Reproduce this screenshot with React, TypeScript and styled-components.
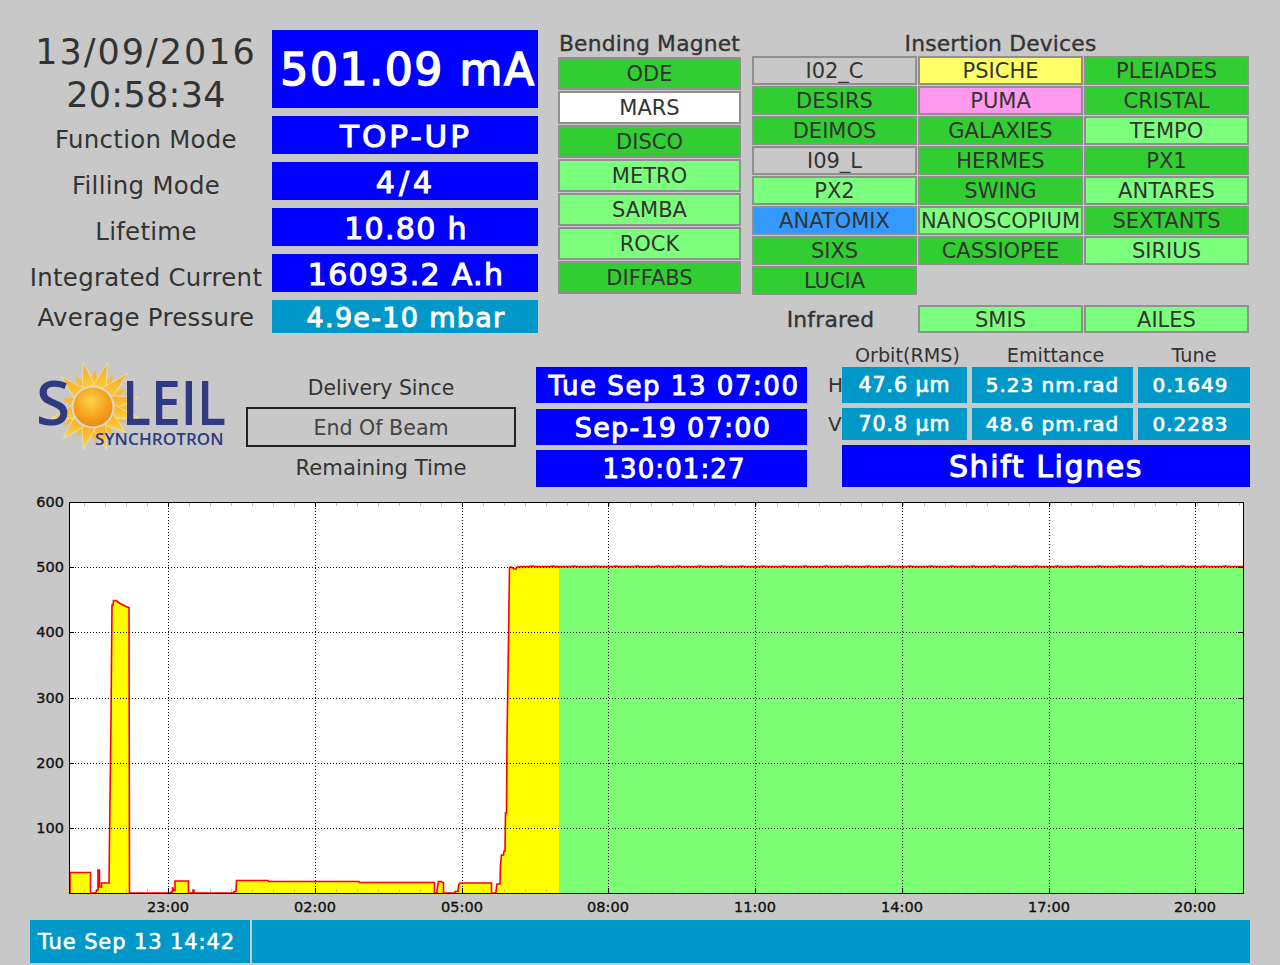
import React from "react";
import styled, { createGlobalStyle } from "styled-components";

const Global = createGlobalStyle`
  html, body { margin: 0; padding: 0; background: #c8c8c8; }
  body { font-family: "DejaVu Sans", sans-serif; color: #333; }
`;

const Page = styled.div`
  width: 1280px;
  height: 965px;
  background: #c8c8c8;
  padding-top: 30px;
  box-sizing: border-box;
  overflow: hidden;
`;

const Top = styled.section`
  display: flex;
  height: 303px;
  margin-left: 30px;
`;

const Status = styled.div`
  width: 508px;
  display: grid;
  grid-template-columns: 232px 266px;
  grid-template-rows: 78px 38px 38px 38px 38px 33px;
  column-gap: 10px;
  row-gap: 8px;
`;

const DateTime = styled.div`
  padding-top: 1px;
  text-align: center;
`;

const DateLine = styled.div<{ $spacing: number }>`
  font-size: 35px;
  line-height: 43px;
  letter-spacing: ${(p) => p.$spacing}px;
  white-space: nowrap;
`;

const FieldLabel = styled.div<{ $drop?: number }>`
  font-size: 24.4px;
  letter-spacing: 0.3px;
  padding-top: ${(p) => p.$drop ?? 9}px;
  box-sizing: border-box;
  display: flex;
  align-items: center;
  justify-content: center;
  white-space: nowrap;
`;

type ValueTone = "blue" | "cyan";
const toneBg: Record<ValueTone, string> = { blue: "#0000ff", cyan: "#0098c8" };

const Value = styled.div<{ $tone?: ValueTone; $size?: number; $spacing?: number; $dy?: number; $inset?: number; $lead?: number }>`
  background: ${(p) => toneBg[p.$tone ?? "blue"]};
  color: #fff;
  font-weight: 400;
  font-size: ${(p) => p.$size ?? 30}px;
  letter-spacing: ${(p) => p.$spacing ?? 0}px;
  -webkit-text-stroke: ${(p) => ((p.$size ?? 30) * 0.036).toFixed(2)}px #fff;
  padding-top: ${(p) => Math.max(p.$dy ?? 0, 0) * 2}px;
  padding-bottom: ${(p) => Math.max(-(p.$dy ?? 0), 0) * 2}px;
  padding-right: ${(p) => p.$inset ?? 0}px;
  padding-left: ${(p) => p.$lead ?? 0}px;
  box-sizing: border-box;
  display: flex;
  align-items: center;
  justify-content: center;
  white-space: nowrap;
`;

const Bending = styled.div`
  width: 183px;
  margin-left: 20px;
  display: grid;
  grid-template-columns: 183px;
  grid-template-rows: 26px repeat(7, 33px);
  row-gap: 1px;
  align-content: start;
`;

const GroupTitle = styled.div`
  font-size: 21.8px;
  letter-spacing: 0.2px;
  -webkit-text-stroke: 0.35px #333;
  text-align: center;
  line-height: 27px;
  white-space: nowrap;
`;

type Tone = "green" | "light" | "white" | "grey" | "yellow" | "pink" | "azure";
const tileBg: Record<Tone, string> = {
  green: "#32cd32",
  light: "#7cff7c",
  white: "#ffffff",
  grey: "#c8c8c8",
  yellow: "#ffff66",
  pink: "#ff99ee",
  azure: "#3399ff",
};

const Tile = styled.div<{ $tone: Tone }>`
  background: ${(p) => tileBg[p.$tone]};
  border: 2px solid #909090;
  box-sizing: border-box;
  font-size: 21px;
  display: flex;
  align-items: center;
  justify-content: center;
  white-space: nowrap;
  overflow: hidden;
`;

const InfraredTile = styled(Tile)`
  padding-top: 2px;
`;

const Insertion = styled.div`
  width: 497px;
  margin-left: 11px;
  display: flex;
  flex-direction: column;
`;

const InsertionGrid = styled.div`
  display: grid;
  grid-template-columns: repeat(3, 165px);
  grid-auto-rows: 29px;
  gap: 1px;
  margin-top: -1px;
`;

const InfraredRow = styled.div`
  display: grid;
  grid-template-columns: repeat(3, 165px);
  grid-template-rows: 28px;
  gap: 1px;
  margin-top: 10px;
`;

const InfraredLabel = styled.div`
  font-size: 21.8px;
  letter-spacing: 0.2px;
  -webkit-text-stroke: 0.35px #333;
  padding-right: 8px;
  display: flex;
  align-items: center;
  justify-content: center;
`;

const Middle = styled.section`
  display: flex;
  height: 142px;
  margin: 12px 0 0 30px;
`;

const Logo = styled.svg`
  width: 200px;
  height: 100px;
  margin-top: 10px;
  flex: none;
`;

const Delivery = styled.div`
  width: 270px;
  margin-left: 16px;
  padding-top: 30px;
  display: flex;
  flex-direction: column;
`;

const DeliveryText = styled.div<{ $size: number }>`
  font-size: ${(p) => p.$size}px;
  line-height: 26px;
  height: 24px;
  text-align: center;
`;

const BeamBox = styled.div`
  height: 40px;
  margin: 8px 0;
  padding-top: 2px;
  border: 2px solid #222;
  box-sizing: border-box;
  font-size: 20.6px;
  color: #444;
  display: flex;
  align-items: center;
  justify-content: center;
`;

const Dates = styled.div`
  width: 271px;
  margin-left: 20px;
  padding-top: 22px;
  display: grid;
  grid-template-rows: 37px 36px 37px;
  row-gap: 5px;
  & > :first-child { height: 36px; }
`;

const Machine = styled.div`
  width: 422px;
  margin-left: 21px;
  display: grid;
  grid-template-columns: 9px 125px 161px 112px;
  grid-template-rows: 17px 36px 32px 42px;
  column-gap: 5px;
  row-gap: 5px;
`;

const Heading = styled.div<{ $nudge?: number }>`
  font-size: 19.2px;
  line-height: 20px;
  margin-top: 1px;
  padding-left: ${(p) => p.$nudge ?? 0}px;
  text-align: center;
  white-space: nowrap;
`;

const Plane = styled.div`
  font-size: 20px;
  display: flex;
  align-items: center;
  white-space: nowrap;
`;

const Shift = styled(Value)`
  grid-column: 2 / 5;
`;

const Chart = styled.svg`
  display: block;
  width: 1280px;
  height: 433px;
`;

const AxisText = styled.text`
  font-family: "DejaVu Sans", sans-serif;
  font-size: 14.5px;
  fill: #111;
  stroke: #111;
  stroke-width: 0.35px;
`;

const LogoWord = styled.text`
  font-family: "Open Sans", sans-serif;
  font-size: 62px;
  font-weight: 600;
  fill: #2f3a83;
`;

const LogoSub = styled.text`
  font-family: "Open Sans", sans-serif;
  font-size: 17px;
  font-weight: 600;
  letter-spacing: 0.1px;
  fill: #2f3a83;
`;

const Footer = styled.footer`
  display: flex;
  gap: 2px;
  width: 1220px;
  height: 43px;
  margin-left: 30px;
`;

const FooterCell = styled.div`
  background: #0098c8;
  color: #fff;
  font-size: 21px;
  letter-spacing: 0.9px;
  -webkit-text-stroke: 0.6px #fff;
  display: flex;
  align-items: center;
  padding-left: 8px;
  box-sizing: border-box;
  &:first-child { width: 220px; }
  &:last-child { flex: 1; }
`;

const bending: [string, Tone][] = [
  ["ODE", "green"],
  ["MARS", "white"],
  ["DISCO", "green"],
  ["METRO", "light"],
  ["SAMBA", "light"],
  ["ROCK", "light"],
  ["DIFFABS", "green"],
];

const devices: [string, Tone][] = [
  ["I02_C", "grey"], ["PSICHE", "yellow"], ["PLEIADES", "green"],
  ["DESIRS", "green"], ["PUMA", "pink"], ["CRISTAL", "green"],
  ["DEIMOS", "green"], ["GALAXIES", "green"], ["TEMPO", "light"],
  ["I09_L", "grey"], ["HERMES", "green"], ["PX1", "green"],
  ["PX2", "light"], ["SWING", "green"], ["ANTARES", "light"],
  ["ANATOMIX", "azure"], ["NANOSCOPIUM", "light"], ["SEXTANTS", "green"],
  ["SIXS", "green"], ["CASSIOPEE", "green"], ["SIRIUS", "light"],
  ["LUCIA", "green"],
];

const rise: [number, number][] = [
  [70, 893], [70, 872.5], [90.5, 872.5], [90.5, 893], [96, 893], [96.5, 890], [98, 890], [98, 870], [99.5, 870],
  [99.5, 887], [101.5, 887], [101.5, 883], [109, 883], [109.5, 840], [111, 720], [112, 605], [113, 605], [113.5, 600.5],
  [116, 600.5], [118, 602], [120, 603.5], [122, 604.5], [124, 605.5], [126, 606.5], [129, 607.5], [129.5, 893],
  [171, 893], [171, 892], [172.5, 892], [172.5, 887], [173.5, 890.5], [175, 890.5], [175, 881], [188.5, 881], [188.5, 893],
  [193, 893], [193, 890], [194, 890], [194, 893], [234, 893], [234, 891.5], [236, 891.5], [236.5, 880.5], [268, 880.5],
  [268.5, 881.5], [359, 881.5], [359.5, 882.5], [434.5, 882.5], [434.5, 893], [437, 893], [437, 890], [438.5, 881.5],
  [441.5, 881.5], [442, 882.5], [443.5, 882.5], [443.5, 893], [455, 893], [455, 891.5], [458, 891.5], [458, 890],
  [459, 884], [460, 883], [491.5, 883], [491.5, 893], [496, 893], [496, 891], [497, 884], [500, 884], [500.5, 865], [501.5, 855],
  [503.5, 855], [504, 851], [505, 851], [505.5, 813], [506.5, 813], [507, 740], [508.5, 640], [509.5, 568], [510.5, 567],
  [513, 568], [514, 569], [516, 569], [517, 567],
];

const plateau: [number, number][] = Array.from({ length: 242 }, (_, i) => {
  const x = 520 + i * 3;
  return [x, (x * 13) % 7 < 1 ? 566 : 566.6] as [number, number];
});

const toPoints = (pts: [number, number][]) => pts.map((p) => p.join(",")).join(" ");
const tracePath = toPoints([...rise, ...plateau, [1243, 566.5]]);
const yellowPath = toPoints([...rise, [559, 567], [559, 893]]);

const yGrid: [number, string][] = [[567, "500"], [632, "400"], [698, "300"], [763, "200"], [828, "100"]];
const xGrid: [number, string][] = [
  [168, "23:00"], [315, "02:00"], [462, "05:00"], [608, "08:00"],
  [755, "11:00"], [902, "14:00"], [1049, "17:00"], [1195, "20:00"],
];
const minor = Array.from({ length: 56 }, (_, i) => 84 + i * 21).filter((x) => x < 1243);

const rays = [
  [250, 68], [322, 70], [383, 100], [415, 172], [418, 235], [378, 278], [320, 330], [250, 328], [190, 295], [155, 235], [185, 110],
];

const SUN_X = 63;
const SUN_Y = 52;

function rayPoints(tx: number, ty: number, spread: number) {
  const a = Math.atan2(ty - SUN_Y, tx - SUN_X);
  const r = 19;
  return `${tx},${ty} ${SUN_X + r * Math.cos(a - spread)},${SUN_Y + r * Math.sin(a - spread)} ${SUN_X + r * Math.cos(a + spread)},${SUN_Y + r * Math.sin(a + spread)}`;
}

function SoleilLogo() {
  const tips = rays.map(([zx, zy]) => [zx / 3 - 30, 340 + zy / 3 - 355]);
  const shortTips = tips.map(([tx, ty], i) => {
    const [nx, ny] = tips[(i + 1) % tips.length];
    const mx = (tx + nx) / 2 - SUN_X;
    const my = (ty + ny) / 2 - SUN_Y;
    return [SUN_X + mx * 0.85, SUN_Y + my * 0.85];
  });
  return (
    <Logo viewBox="0 0 200 100" aria-label="Soleil Synchrotron">
      <defs>
        <radialGradient id="disc" cx="45%" cy="35%" r="70%">
          <stop offset="0%" stopColor="#ffd34d" />
          <stop offset="55%" stopColor="#f7a51c" />
          <stop offset="100%" stopColor="#e8841a" />
        </radialGradient>
        <linearGradient id="ray" x1="0" y1="0" x2="0" y2="1">
          <stop offset="0%" stopColor="#f8a92c" />
          <stop offset="100%" stopColor="#fcd23e" />
        </linearGradient>
      </defs>
      {shortTips.map(([tx, ty], i) => (
        <polygon key={`s${i}`} points={rayPoints(tx, ty, 0.3)} fill="#f9bb30" />
      ))}
      {tips.map(([tx, ty], i) => (
        <polygon key={i} points={rayPoints(tx, ty, 0.42)} fill="url(#ray)" stroke="#f5efc8" strokeWidth="0.6" />
      ))}
      <circle cx={SUN_X} cy={SUN_Y} r="21.5" fill="#d8d8d0" />
      <circle cx={SUN_X} cy={SUN_Y} r="19.5" fill="url(#disc)" />
      <LogoWord x="6" y="70">S</LogoWord>
      <LogoWord transform="translate(92 70) scale(0.86 1)">LEIL</LogoWord>
      <LogoSub x="65" y="90">SYNCHROTRON</LogoSub>
    </Logo>
  );
}

function BeamChart() {
  return (
    <Chart viewBox="0 487 1280 433" aria-label="Beam current">
      <rect x="69" y="502" width="1175" height="391" fill="#fff" />
      <polygon points={yellowPath} fill="#ffff00" />
      <rect x="559" y="567" width="684" height="326" fill="#7cff74" />
      <polyline points={tracePath} fill="none" stroke="#ff0000" strokeWidth="1.6" />
      {yGrid.map(([y]) => (
        <line key={y} x1="69" x2="1243" y1={y + 0.5} y2={y + 0.5} stroke="#000" strokeDasharray="1 2" />
      ))}
      {xGrid.map(([x]) => (
        <line key={x} x1={x + 0.5} x2={x + 0.5} y1="502" y2="893" stroke="#000" strokeDasharray="1 2" />
      ))}
      {minor.map((x) => (
        <g key={x} stroke="#bdbdbd">
          <line x1={x + 0.5} x2={x + 0.5} y1="503" y2="506" />
          <line x1={x + 0.5} x2={x + 0.5} y1="889" y2="892" />
        </g>
      ))}
      {xGrid.map(([x]) => (
        <g key={x} stroke="#000">
          <line x1={x + 0.5} x2={x + 0.5} y1="503" y2="507" />
          <line x1={x + 0.5} x2={x + 0.5} y1="888" y2="892" />
        </g>
      ))}
      {yGrid.map(([y]) => (
        <g key={y} stroke="#000">
          <line x1="70" x2="74" y1={y + 0.5} y2={y + 0.5} />
          <line x1="1238" x2="1243" y1={y + 0.5} y2={y + 0.5} />
        </g>
      ))}
      <rect x="69.5" y="502.5" width="1174" height="391" fill="none" stroke="#000" />
      <AxisText x="64" y="507" textAnchor="end">600</AxisText>
      {yGrid.map(([y, t]) => (
        <AxisText key={t} x="64" y={y + 5} textAnchor="end">{t}</AxisText>
      ))}
      {xGrid.map(([x, t]) => (
        <AxisText key={t} x={x} y="912" textAnchor="middle">{t}</AxisText>
      ))}
    </Chart>
  );
}

export default function App() {
  return (
    <Page>
      <Global />
      <Top>
        <Status>
          <DateTime>
            <DateLine $spacing={2}>13/09/2016</DateLine>
            <DateLine $spacing={0.3}>20:58:34</DateLine>
          </DateTime>
          <Value $size={44} $spacing={1.6} $lead={6}>501.09 mA</Value>
          <FieldLabel>Function Mode</FieldLabel>
          <Value $size={31} $spacing={3} $dy={1} $lead={2}>TOP-UP</Value>
          <FieldLabel>Filling Mode</FieldLabel>
          <Value $size={30} $spacing={4} $dy={1} $lead={2}>4/4</Value>
          <FieldLabel>Lifetime</FieldLabel>
          <Value $size={30} $spacing={1.3} $dy={1} $lead={2}>10.80 h</Value>
          <FieldLabel>Integrated Current</FieldLabel>
          <Value $size={30} $spacing={1.3} $dy={1} $lead={2}>16093.2 A.h</Value>
          <FieldLabel $drop={2}>Average Pressure</FieldLabel>
          <Value $tone="cyan" $size={27} $spacing={1.3} $dy={1} $lead={2}>4.9e-10 mbar</Value>
        </Status>
        <Bending>
          <GroupTitle>Bending Magnet</GroupTitle>
          {bending.map(([n, t]) => (
            <Tile key={n} $tone={t}>{n}</Tile>
          ))}
        </Bending>
        <Insertion>
          <GroupTitle>Insertion Devices</GroupTitle>
          <InsertionGrid>
            {devices.map(([n, t]) => (
              <Tile key={n} $tone={t}>{n}</Tile>
            ))}
          </InsertionGrid>
          <InfraredRow>
            <InfraredLabel>Infrared</InfraredLabel>
            <InfraredTile $tone="light">SMIS</InfraredTile>
            <InfraredTile $tone="light">AILES</InfraredTile>
          </InfraredRow>
        </Insertion>
      </Top>
      <Middle>
        <SoleilLogo />
        <Delivery>
          <DeliveryText $size={20.4}>Delivery Since</DeliveryText>
          <BeamBox>End Of Beam</BeamBox>
          <DeliveryText $size={21.2}>Remaining Time</DeliveryText>
        </Delivery>
        <Dates>
          <Value $size={26} $spacing={1.55} $dy={1} $lead={5}>Tue Sep 13 07:00</Value>
          <Value $size={27} $spacing={1.25} $lead={3}>Sep-19 07:00</Value>
          <Value $size={26} $spacing={1.1} $lead={5}>130:01:27</Value>
        </Dates>
        <Machine>
          <span />
          <Heading $nudge={6}>Orbit(RMS)</Heading>
          <Heading $nudge={6}>Emittance</Heading>
          <Heading>Tune</Heading>
          <Plane>H</Plane>
          <Value $tone="cyan" $size={20.5} $spacing={1}>47.6 µm</Value>
          <Value $tone="cyan" $size={20} $spacing={1}>5.23 nm.rad</Value>
          <Value $tone="cyan" $size={20} $spacing={1} $inset={7}>0.1649</Value>
          <Plane>V</Plane>
          <Value $tone="cyan" $size={20.5} $spacing={1}>70.8 µm</Value>
          <Value $tone="cyan" $size={20} $spacing={1}>48.6 pm.rad</Value>
          <Value $tone="cyan" $size={20} $spacing={1} $inset={7}>0.2283</Value>
          <Shift $size={30} $spacing={1.6}>Shift Lignes</Shift>
        </Machine>
      </Middle>
      <BeamChart />
      <Footer>
        <FooterCell>Tue Sep 13 14:42</FooterCell>
        <FooterCell />
      </Footer>
    </Page>
  );
}
